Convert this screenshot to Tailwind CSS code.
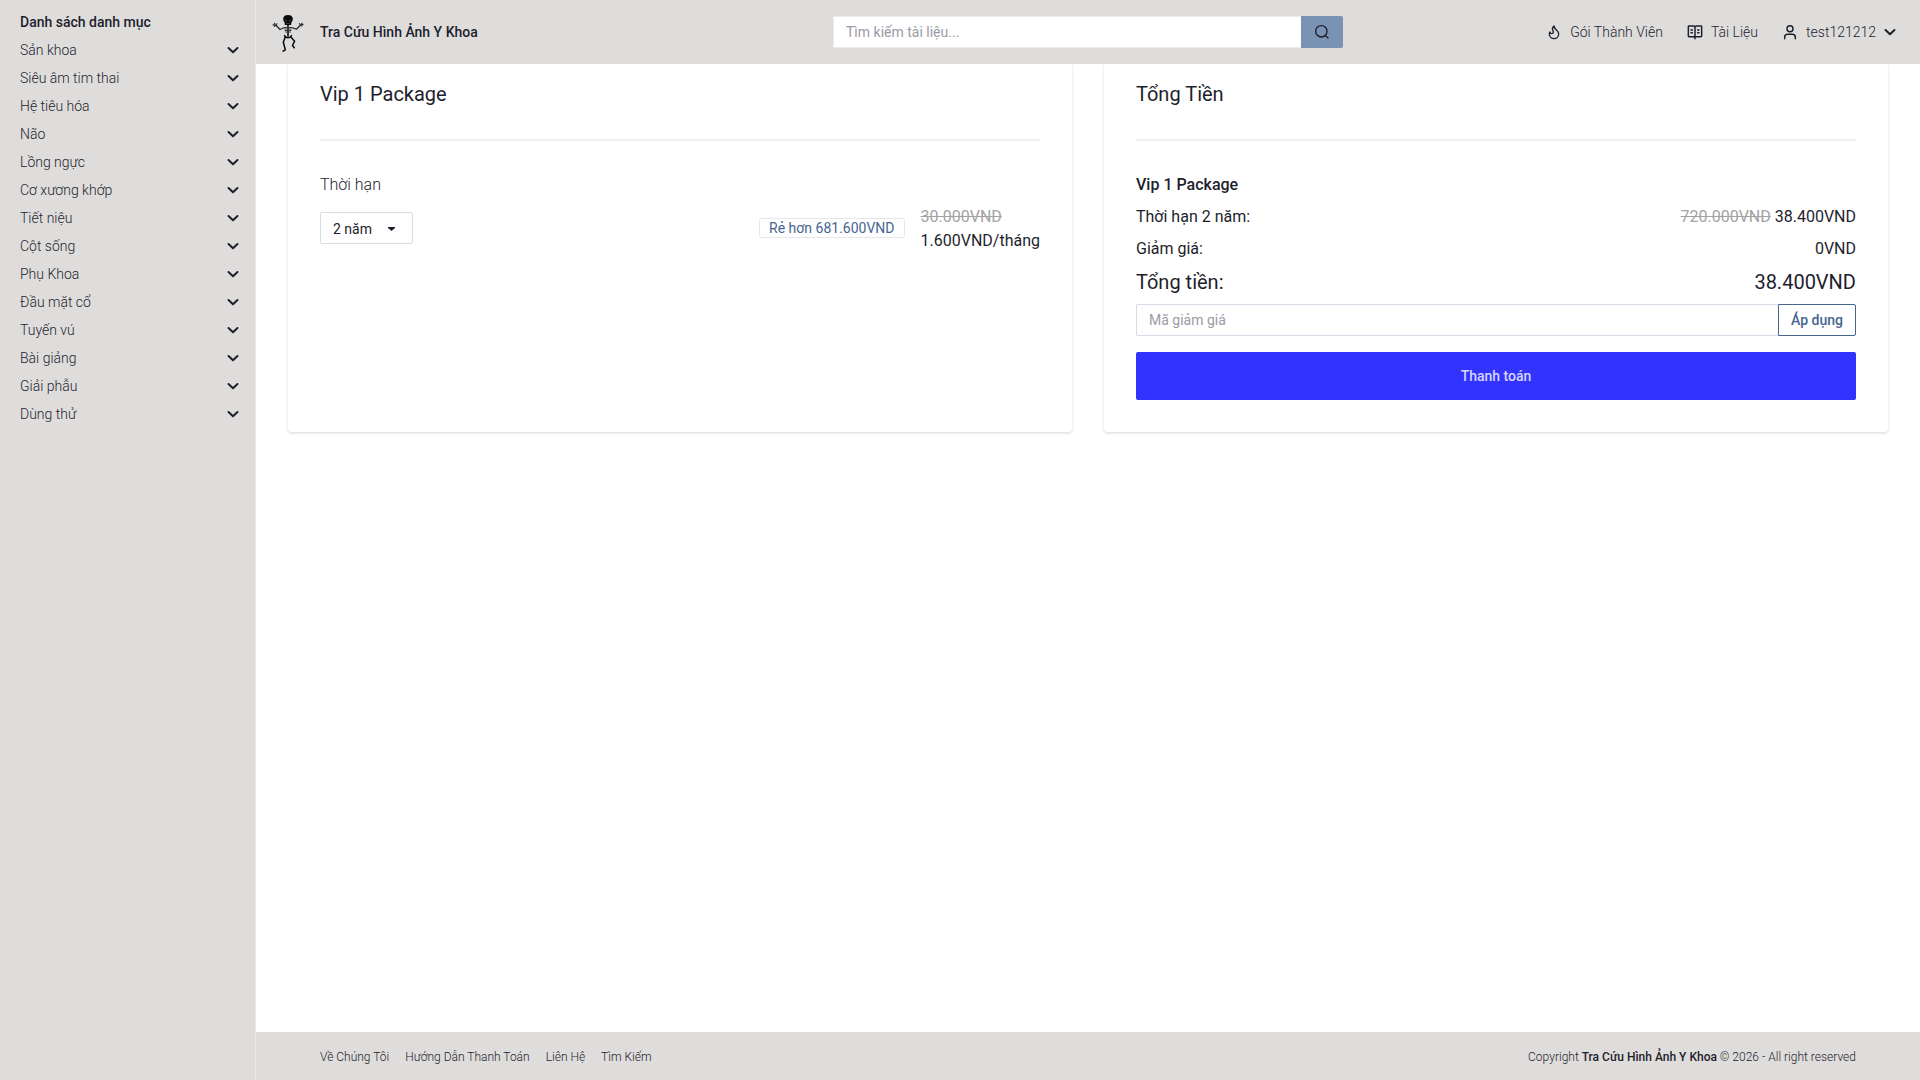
<!DOCTYPE html>
<html lang="vi">
<head>
    <meta charset="UTF-8">
    <meta name="viewport" content="width=device-width, initial-scale=1.0">
    <title>Tra Cứu Hình Ảnh Y Khoa</title>
    <script src="https://cdn.jsdelivr.net/npm/@tailwindcss/browser@4"></script>
</head>
<body class="min-h-screen flex bg-white font-['Roboto',sans-serif] font-light text-sm text-[#1e1e2d]">
    <!-- Shared symbols -->
    <svg class="hidden" xmlns="http://www.w3.org/2000/svg">
        <symbol id="chevron" viewBox="0 0 12 12">
            <path d="M1.500 4L6 8.300 10.500 4" fill="none" stroke="currentColor" stroke-width="2" stroke-linecap="round" stroke-linejoin="round" />
        </symbol>
    </svg>

    <!-- Sidebar -->
    <aside class="w-64 shrink-0 bg-[#dedddc] border-r border-[#ebebea] pl-5 pr-4 pt-3">
        <h2 class="font-medium leading-5 mb-1">Danh sách danh mục</h2>
        <nav>
            <ul>
                <li><button type="button" class="w-full h-7 flex items-center justify-between">Sản khoa <svg class="size-3"><use href="#chevron" /></svg></button></li>
                <li><button type="button" class="w-full h-7 flex items-center justify-between">Siêu âm tim thai <svg class="size-3"><use href="#chevron" /></svg></button></li>
                <li><button type="button" class="w-full h-7 flex items-center justify-between">Hệ tiêu hóa <svg class="size-3"><use href="#chevron" /></svg></button></li>
                <li><button type="button" class="w-full h-7 flex items-center justify-between">Não <svg class="size-3"><use href="#chevron" /></svg></button></li>
                <li><button type="button" class="w-full h-7 flex items-center justify-between">Lồng ngực <svg class="size-3"><use href="#chevron" /></svg></button></li>
                <li><button type="button" class="w-full h-7 flex items-center justify-between">Cơ xương khớp <svg class="size-3"><use href="#chevron" /></svg></button></li>
                <li><button type="button" class="w-full h-7 flex items-center justify-between">Tiết niệu <svg class="size-3"><use href="#chevron" /></svg></button></li>
                <li><button type="button" class="w-full h-7 flex items-center justify-between">Cột sống <svg class="size-3"><use href="#chevron" /></svg></button></li>
                <li><button type="button" class="w-full h-7 flex items-center justify-between">Phụ Khoa <svg class="size-3"><use href="#chevron" /></svg></button></li>
                <li><button type="button" class="w-full h-7 flex items-center justify-between">Đầu mặt cổ <svg class="size-3"><use href="#chevron" /></svg></button></li>
                <li><button type="button" class="w-full h-7 flex items-center justify-between">Tuyến vú <svg class="size-3"><use href="#chevron" /></svg></button></li>
                <li><button type="button" class="w-full h-7 flex items-center justify-between">Bài giảng <svg class="size-3"><use href="#chevron" /></svg></button></li>
                <li><button type="button" class="w-full h-7 flex items-center justify-between">Giải phẫu <svg class="size-3"><use href="#chevron" /></svg></button></li>
                <li><button type="button" class="w-full h-7 flex items-center justify-between">Dùng thử <svg class="size-3"><use href="#chevron" /></svg></button></li>
            </ul>
        </nav>
    </aside>

    <div class="flex-1 min-w-0 flex flex-col">
        <!-- Header -->
        <header class="h-16 bg-[#dedddc] px-4 grid grid-cols-3 items-center">
            <a href="#" class="flex items-center gap-4 font-medium">
                <svg class="w-8 h-10" viewBox="0 0 32 40" fill="none" stroke="#0b0b0d" stroke-linecap="round" stroke-linejoin="round" aria-hidden="true">
                    <path d="M11.200 7C11.200 4.300 13 3 16 3s4.800 1.300 4.800 4c0 1.500-.5 2.500-1.300 3l-.4 3h-6.200l-.4-3c-.8-.5-1.300-1.500-1.300-3z" fill="#0b0b0d" stroke="none" />
                    <path d="M13.500 8.500h1.200M17.300 8.500h1.200M14.500 11.300h3" stroke="#5d5d60" stroke-width=".7" />
                    <path d="M16 13v11" stroke-width="1.600" />
                    <path d="M12.500 15.500h7M12.800 17h6.400M13 18.500h6M13.500 20h5" stroke="#3c3c40" stroke-width="1" />
                    <path d="M12.500 15.500L8 17.500l-4-4.200M19.500 15.500l5 1.700 4-4.200" stroke="#2a2a2d" stroke-width="1.300" />
                    <path d="M4 13.300L1 12.800M4 13.300l-1.500 1M4 13.300l1-1.600M3 12l-.6-.7M28.500 13l2.600-.6M28.500 13l1.500 1M28.500 13l-1-1.400M29.500 12l.5-.8" stroke="#333336" stroke-width="1.200" />
                    <path d="M13 24.500c1 1.500 5 1.500 6 0l.5-1M13 24.500l-.4-1" stroke-width="1.500" />
                    <path d="M13.300 25l-2 5.200 2 7.600-2.200 1.400M19.300 25.500l3.300 3.700-2.100 4.300 1.800 2.300" stroke-width="1.500" />
                </svg>
                Tra Cứu Hình Ảnh Y Khoa
            </a>
            <form class="flex mx-[17px] h-8" role="search">
                <input type="search" aria-label="Tìm kiếm tài liệu" placeholder="Tìm kiếm tài liệu..."
                    class="flex-1 min-w-0 h-8 bg-white rounded-l-xs border border-r-0 border-[#ebebea] px-3 font-normal placeholder:text-[#9b9ba5] outline-none">
                <button type="submit" class="w-[42px] h-8 bg-[#7a92b3] rounded-r-xs flex items-center justify-center" aria-label="Tìm kiếm">
                    <svg class="size-4" viewBox="0 0 24 24" fill="none" stroke="currentColor" stroke-width="2" stroke-linecap="round">
                        <circle cx="11" cy="11" r="8.500" />
                        <path d="M21 21l-3.500-3.500" />
                    </svg>
                </button>
            </form>
            <nav class="flex items-center justify-end gap-6 pr-2">
                <a href="#" class="flex items-center gap-2">
                    <svg class="size-4" viewBox="0 0 24 24" fill="none" stroke="currentColor" stroke-width="2" stroke-linecap="round" stroke-linejoin="round">
                        <path d="M8.500 14.500A2.500 2.500 0 0 0 11 12c0-1.380-.5-2-1-3-1.072-2.143-.224-4.054 2-6 .5 2.500 2 4.900 4 6.500 2 1.600 3 3.500 3 5.500a7 7 0 1 1-14 0c0-1.153.433-2.294 1-3a2.500 2.500 0 0 0 2.500 2.500z" />
                    </svg>
                    Gói Thành Viên
                </a>
                <a href="#" class="flex items-center gap-2">
                    <svg class="size-4" viewBox="0 0 24 24" fill="none" stroke="currentColor" stroke-width="2.200" stroke-linecap="round" stroke-linejoin="round">
                        <path d="M12 5v17M3 3h7a2 2 0 0 1 2 2 2 2 0 0 1 2-2h7a1 1 0 0 1 1 1v14a1 1 0 0 1-1 1h-7a2 2 0 0 0-2 2 2 2 0 0 0-2-2H3a1 1 0 0 1-1-1V4a1 1 0 0 1 1-1z" />
                        <path d="M6 9h2M6 13h2M16 9h2M16 13h2" />
                    </svg>
                    Tài Liệu
                </a>
                <button type="button" class="flex items-center gap-2">
                    <svg class="size-4" viewBox="0 0 24 24" fill="none" stroke="currentColor" stroke-width="2.200" stroke-linecap="round" stroke-linejoin="round">
                        <circle cx="12" cy="7" r="4.500" />
                        <path d="M20 22v-2a4.500 4.500 0 0 0-4.500-4.500h-7A4.500 4.500 0 0 0 4 20v2" />
                    </svg>
                    test121212
                    <svg class="size-3"><use href="#chevron" /></svg>
                </button>
            </nav>
        </header>

        <!-- Checkout -->
        <main class="flex-1 px-8">
            <div class="grid grid-cols-2 gap-8">
                <section class="bg-white rounded-b shadow-[0_1px_3px_rgba(0,0,0,0.16)] [clip-path:inset(0_-4px_-4px_-4px)] px-8 pt-4 pb-8">
                    <h2 class="text-xl font-normal">Vip 1 Package</h2>
                    <hr class="my-[31px] border-t-2 border-[#eceeef]">
                    <label for="duration" class="block text-base leading-[26px]">Thời hạn</label>
                    <div class="mt-[5px] flex items-center justify-between font-normal">
                        <div class="relative">
                            <select id="duration" class="appearance-none block w-[93px] h-8 pl-3 pr-8 pt-0.5 bg-white border border-[#d8dce6] rounded-xs">
                                <option>1 tháng</option>
                                <option>1 năm</option>
                                <option selected>2 năm</option>
                            </select>
                            <svg class="absolute right-[18px] top-[15px] w-[7px] h-1 pointer-events-none" viewBox="0 0 7 4" fill="currentColor"><path d="M0 0h7v1L3.500 4 0 1z" /></svg>
                        </div>
                        <div class="flex items-center gap-4">
                            <span class="h-5 px-[9px] leading-[18px] border border-[#e5e7ea] rounded-xs text-[#46658f]">Rẻ hơn 681.600VND</span>
                            <div class="pt-0.5 text-base">
                                <p><del class="text-[#a3a3a3]">30.000VND</del></p>
                                <p>1.600VND/tháng</p>
                            </div>
                        </div>
                    </div>
                </section>

                <section class="bg-white rounded-b shadow-[0_1px_3px_rgba(0,0,0,0.16)] [clip-path:inset(0_-4px_-4px_-4px)] px-8 pt-4 pb-8 font-normal">
                    <h2 class="text-xl">Tổng Tiền</h2>
                    <hr class="my-[31px] border-t-2 border-[#eceeef]">
                    <div class="space-y-1.5 text-base leading-[26px]">
                        <p class="font-medium">Vip 1 Package</p>
                        <div class="flex justify-between">
                            <span>Thời hạn 2 năm:</span>
                            <span><del class="text-[#a3a3a3]">720.000VND</del> 38.400VND</span>
                        </div>
                        <div class="flex justify-between">
                            <span>Giảm giá:</span>
                            <span>0VND</span>
                        </div>
                        <div class="flex justify-between text-xl">
                            <span>Tổng tiền:</span>
                            <span>38.400VND</span>
                        </div>
                    </div>
                    <form class="mt-2 flex">
                        <input type="text" aria-label="Mã giảm giá" placeholder="Mã giảm giá"
                            class="flex-1 min-w-0 h-8 px-3 border border-r-0 border-[#d8dce6] rounded-l-xs placeholder:text-[#9b9ba5] outline-none">
                        <button type="submit" class="h-8 px-3 border border-[#46658f] rounded-r-xs font-medium text-[#46658f]">Áp dụng</button>
                    </form>
                    <button type="button" class="mt-4 w-full h-12 bg-[#3333ff] rounded-xs font-medium text-[#d6d6ff]">Thanh toán</button>
                </section>
            </div>
        </main>

        <!-- Footer -->
        <footer class="h-12 bg-[#dedddc] px-16 pt-0.5 flex items-center justify-between text-xs">
            <nav class="flex gap-4">
                <a href="#">Về Chúng Tôi</a>
                <a href="#">Hướng Dẫn Thanh Toán</a>
                <a href="#">Liên Hệ</a>
                <a href="#">Tìm Kiếm</a>
            </nav>
            <p>Copyright <span class="font-medium">Tra Cứu Hình Ảnh Y Khoa</span> © 2026 - All right reserved</p>
        </footer>
    </div>
</body>
</html>
